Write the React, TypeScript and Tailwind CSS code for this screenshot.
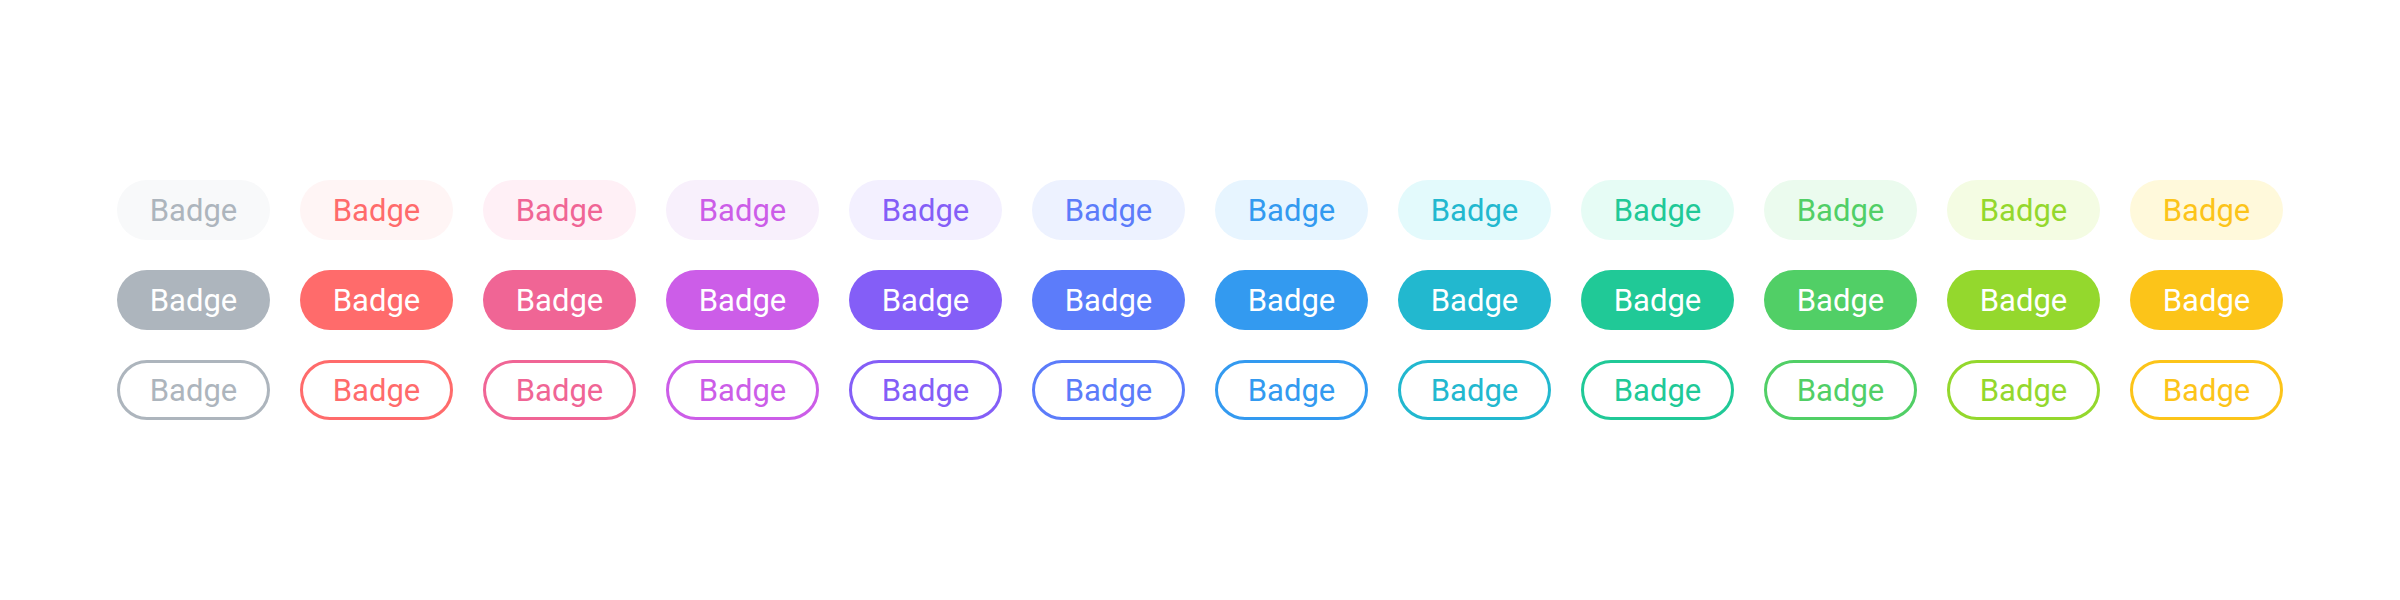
import React from "react";

const colors = [
  { light: "bg-[#f8f9fa]", text: "text-[#adb5bd]", solid: "bg-[#adb5bd]", border: "border-[#adb5bd]" },
  { light: "bg-[#fff5f5]", text: "text-[#ff6b6b]", solid: "bg-[#ff6b6b]", border: "border-[#ff6b6b]" },
  { light: "bg-[#fff0f6]", text: "text-[#f06595]", solid: "bg-[#f06595]", border: "border-[#f06595]" },
  { light: "bg-[#f8f0fc]", text: "text-[#cc5de8]", solid: "bg-[#cc5de8]", border: "border-[#cc5de8]" },
  { light: "bg-[#f3f0ff]", text: "text-[#845ef7]", solid: "bg-[#845ef7]", border: "border-[#845ef7]" },
  { light: "bg-[#edf2ff]", text: "text-[#5c7cfa]", solid: "bg-[#5c7cfa]", border: "border-[#5c7cfa]" },
  { light: "bg-[#e7f5ff]", text: "text-[#339af0]", solid: "bg-[#339af0]", border: "border-[#339af0]" },
  { light: "bg-[#e3fafc]", text: "text-[#22b8cf]", solid: "bg-[#22b8cf]", border: "border-[#22b8cf]" },
  { light: "bg-[#e6fcf5]", text: "text-[#20c997]", solid: "bg-[#20c997]", border: "border-[#20c997]" },
  { light: "bg-[#ebfbee]", text: "text-[#51cf66]", solid: "bg-[#51cf66]", border: "border-[#51cf66]" },
  { light: "bg-[#f4fce3]", text: "text-[#94d82d]", solid: "bg-[#94d82d]", border: "border-[#94d82d]" },
  { light: "bg-[#fff9db]", text: "text-[#fcc419]", solid: "bg-[#fcc419]", border: "border-[#fcc419]" },
];

const base =
  "w-[153px] h-[60px] rounded-full flex items-center justify-center text-[31px] font-normal leading-none";

export default function App() {
  return (
    <div
      className="w-[2400px] h-[600px] bg-white flex items-center justify-center"
      style={{ fontFamily: "Roboto, 'Liberation Sans', sans-serif" }}
    >
      <div className="grid grid-cols-[repeat(12,153px)] gap-[30px]">
        {colors.map((c, i) => (
          <div key={"l" + i} className={`${base} ${c.light} ${c.text}`}>
            Badge
          </div>
        ))}
        {colors.map((c, i) => (
          <div key={"s" + i} className={`${base} ${c.solid} text-white`}>
            Badge
          </div>
        ))}
        {colors.map((c, i) => (
          <div key={"o" + i} className={`${base} border-[3px] bg-white ${c.border} ${c.text}`}>
            Badge
          </div>
        ))}
      </div>
    </div>
  );
}
